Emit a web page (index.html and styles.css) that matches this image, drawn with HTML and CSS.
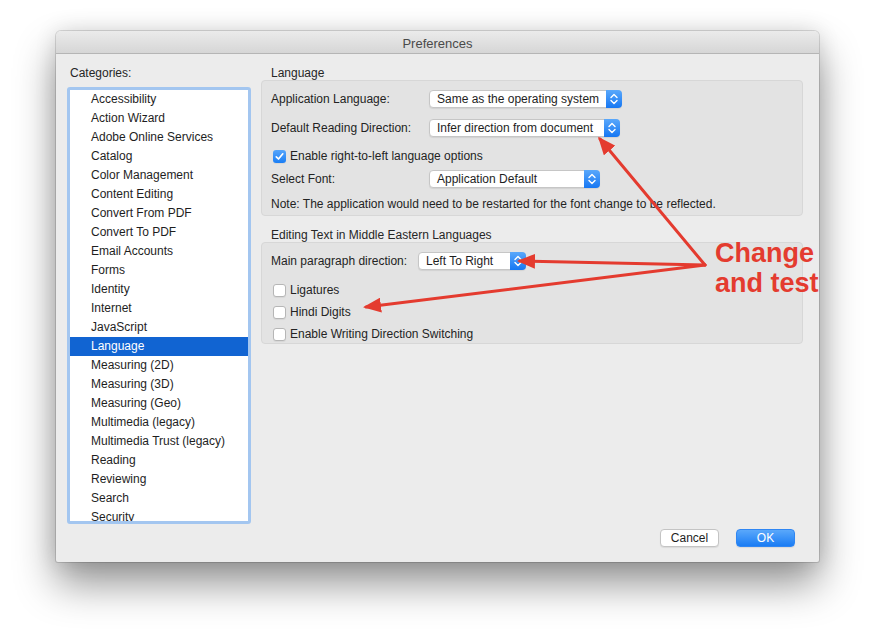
FILE: index.html
```html
<!DOCTYPE html>
<html lang="en">
<head>
  <meta charset="UTF-8" />
  <title>Preferences</title>
  <link rel="stylesheet" href="styles.css">
</head>
<body>
  <div class="stage">
    <div class="window">
      <div class="titlebar">Preferences</div>

      <div class="content">
        <!-- left: category list -->
        <div class="categories">
          <div class="group-label">Categories:</div>
          <ul class="cat-list">
            <li>Accessibility</li>
            <li>Action Wizard</li>
            <li>Adobe Online Services</li>
            <li>Catalog</li>
            <li>Color Management</li>
            <li>Content Editing</li>
            <li>Convert From PDF</li>
            <li>Convert To PDF</li>
            <li>Email Accounts</li>
            <li>Forms</li>
            <li>Identity</li>
            <li>Internet</li>
            <li>JavaScript</li>
            <li class="selected">Language</li>
            <li>Measuring (2D)</li>
            <li>Measuring (3D)</li>
            <li>Measuring (Geo)</li>
            <li>Multimedia (legacy)</li>
            <li>Multimedia Trust (legacy)</li>
            <li>Reading</li>
            <li>Reviewing</li>
            <li>Search</li>
            <li>Security</li>
          </ul>
        </div>

        <!-- right: settings -->
        <div class="settings">
          <div class="group-label">Language</div>
          <div class="panel panel-lang">
            <div class="row row-app">
              <span class="label">Application Language:</span>
              <div class="select select-app">
                <span class="select-text">Same as the operating system</span>
                <span class="stepper"><svg width="16" height="18" viewBox="0 0 16 18"><path d="M5 7.5 L8 4.5 L11 7.5 M5 10.5 L8 13.5 L11 10.5" fill="none" stroke="#fff" stroke-width="1.4" stroke-linecap="round" stroke-linejoin="round"/></svg></span>
              </div>
            </div>
            <div class="row row-dir">
              <span class="label">Default Reading Direction:</span>
              <div class="select select-dir">
                <span class="select-text">Infer direction from document</span>
                <span class="stepper"><svg width="16" height="18" viewBox="0 0 16 18"><path d="M5 7.5 L8 4.5 L11 7.5 M5 10.5 L8 13.5 L11 10.5" fill="none" stroke="#fff" stroke-width="1.4" stroke-linecap="round" stroke-linejoin="round"/></svg></span>
              </div>
            </div>
            <div class="row row-check">
              <span class="checkbox checked"><svg width="13" height="13" viewBox="0 0 13 13"><path d="M3.3 6.8 L5.5 9 L9.8 3.8" fill="none" stroke="#fff" stroke-width="1.7" stroke-linecap="round" stroke-linejoin="round"/></svg></span>
              <span>Enable right-to-left language options</span>
            </div>
            <div class="row row-font">
              <span class="label">Select Font:</span>
              <div class="select select-font">
                <span class="select-text">Application Default</span>
                <span class="stepper"><svg width="16" height="18" viewBox="0 0 16 18"><path d="M5 7.5 L8 4.5 L11 7.5 M5 10.5 L8 13.5 L11 10.5" fill="none" stroke="#fff" stroke-width="1.4" stroke-linecap="round" stroke-linejoin="round"/></svg></span>
              </div>
            </div>
            <div class="row row-note">
              Note: The application would need to be restarted for the font change to be reflected.
            </div>
          </div>

          <div class="group-label group-label-2">Editing Text in Middle Eastern Languages</div>
          <div class="panel panel-edit">
            <div class="row row-para">
              <span class="label label-short">Main paragraph direction:</span>
              <div class="select select-para">
                <span class="select-text">Left To Right</span>
                <span class="stepper"><svg width="16" height="18" viewBox="0 0 16 18"><path d="M5 7.5 L8 4.5 L11 7.5 M5 10.5 L8 13.5 L11 10.5" fill="none" stroke="#fff" stroke-width="1.4" stroke-linecap="round" stroke-linejoin="round"/></svg></span>
              </div>
            </div>
            <div class="row row-check2">
              <span class="checkbox"></span>
              <span>Ligatures</span>
            </div>
            <div class="row row-check2">
              <span class="checkbox"></span>
              <span>Hindi Digits</span>
            </div>
            <div class="row row-check2">
              <span class="checkbox"></span>
              <span>Enable Writing Direction Switching</span>
            </div>
          </div>
        </div>
      </div>

      <div class="footer">
        <button class="btn">Cancel</button>
        <button class="btn btn-primary">OK</button>
      </div>
    </div>

    <!-- red annotation drawn over the screenshot -->
    <svg class="arrows" width="875" height="643" viewBox="0 0 875 643">
      <defs>
        <marker id="head" markerWidth="6" markerHeight="5" refX="5" refY="2.5" orient="auto" markerUnits="strokeWidth">
          <path d="M0 0 L6 2.5 L0 5 Z" fill="#e43b2f"/>
        </marker>
      </defs>
      <g stroke="#e43b2f" stroke-width="3" fill="none" stroke-linecap="round">
        <line x1="705" y1="265" x2="600" y2="139" marker-end="url(#head)"/>
        <line x1="705" y1="265" x2="520" y2="261" marker-end="url(#head)"/>
        <line x1="705" y1="265" x2="366" y2="307" marker-end="url(#head)"/>
      </g>
    </svg>
    <div class="note-callout">Change<br>and test</div>
  </div>
</body>
</html>
```

FILE: styles.css
```css
* {
  box-sizing: border-box;
  margin: 0;
  padding: 0;
}
body {
  background: #fff;
  font-family: 'Liberation Sans', Arial, sans-serif;
  font-size: 12px;
  color: #232323;
}
.stage {
  position: relative;
  width: 875px;
  height: 643px;
  padding: 31px 0 0 56px;
  overflow: hidden;
}

/* Window */
.window {
  width: 763px;
  height: 531px;
  background: #ececec;
  border-radius: 5px 5px 2px 2px;
  box-shadow: 0 0 0 1px rgba(0, 0, 0, 0.13), 0 22px 40px rgba(0, 0, 0, 0.42), 0 0 22px rgba(0, 0, 0, 0.12);
  display: flex;
  flex-direction: column;
}
.titlebar {
  height: 23px;
  line-height: 22px;
  padding-top: 2px;
  text-align: center;
  font-size: 13px;
  color: #4a4a4a;
  background: linear-gradient(#ebebeb, #d6d6d6);
  border-bottom: 1px solid #b5b5b5;
  border-radius: 5px 5px 0 0;
}
.content {
  display: flex;
  gap: 10px;
  padding: 12px 16px 0 11px;
}
.group-label {
  line-height: 14px;
  height: 14px;
  padding-left: 3px;
  color: #262626;
}

/* Categories */
.categories {
  width: 184px;
}
.cat-list {
  list-style: none;
  margin-top: 7px;
  height: 437px;
  background: #fff;
  border: 3px solid #a3c6f0;
  border-radius: 3px;
  overflow: hidden;
}
.cat-list li {
  height: 19px;
  line-height: 19px;
  padding-left: 21px;
  color: #1e1e1e;
}
.cat-list li.selected {
  background: #1164d2;
  color: #fff;
}

/* Settings */
.settings {
  width: 542px;
}
.settings .group-label {
  padding-left: 10px;
}
.group-label-2 {
  margin-top: 12px;
}
.panel {
  background: #e3e3e3;
  border: 1px solid #d7d7d7;
  border-radius: 4px;
  padding-left: 9px;
}
.panel-lang {
  height: 136px;
  padding-top: 6px;
}
.panel-edit {
  height: 102px;
  padding-top: 6px;
}
.row {
  display: flex;
  align-items: center;
}
.row-app { height: 24px; }
.row-dir { height: 34px; }
.row-check { height: 22px; }
.row-font { height: 24px; }
.row-note { height: 26px; }
.row-para { height: 24px; margin-bottom: 6px; }
.row-check2 { height: 22px; }

.label {
  width: 158px;
  flex-shrink: 0;
}
.label-short {
  width: 147px;
}

/* Popup buttons */
.select {
  height: 18px;
  display: flex;
  justify-content: space-between;
  background: #fff;
  border: 1px solid #c6c6c6;
  border-radius: 4px;
  box-shadow: 0 1px 1px rgba(0, 0, 0, 0.08);
}
.select-app { width: 193px; }
.select-dir { width: 191px; }
.select-font { width: 171px; }
.select-para { width: 108px; }
.select-text {
  line-height: 16px;
  padding-left: 7px;
  white-space: nowrap;
  color: #1e1e1e;
}
.stepper {
  width: 16px;
  height: 18px;
  margin: -1px -1px -1px 0;
  background: linear-gradient(#5aa8fb, #1677f3);
  border-radius: 0 4px 4px 0;
  display: block;
}
.stepper svg {
  display: block;
}

/* Checkboxes */
.checkbox {
  width: 13px;
  height: 13px;
  margin: 0 4px 0 2px;
  background: #fff;
  border: 1px solid #b6b6b6;
  border-radius: 3px;
  box-shadow: 0 1px 1px rgba(0, 0, 0, 0.06);
  flex-shrink: 0;
}
.checkbox.checked {
  border: none;
  background: linear-gradient(#56a5fb, #1a7ef5);
}
.checkbox svg {
  display: block;
}

/* Footer buttons */
.footer {
  margin-top: auto;
  display: flex;
  justify-content: flex-end;
  gap: 17px;
  padding: 0 24px 15px 0;
}
.btn {
  width: 59px;
  height: 18px;
  font-family: 'Liberation Sans', Arial, sans-serif;
  font-size: 12px;
  color: #1e1e1e;
  background: #fff;
  border: 1px solid #c4c4c4;
  border-radius: 4px;
  box-shadow: 0 1px 1px rgba(0, 0, 0, 0.08);
}
.btn-primary {
  color: #fff;
  border-color: #2f86f3;
  background: linear-gradient(#5aa8fb, #1a7cf4);
}

/* Red annotation */
.arrows {
  position: absolute;
  left: 0;
  top: 0;
  pointer-events: none;
}
.note-callout {
  position: absolute;
  left: 715px;
  top: 238px;
  font-family: 'Liberation Sans', Arial, sans-serif;
  font-weight: 700;
  font-size: 27px;
  line-height: 30px;
  color: #e43b2f;
}
```
